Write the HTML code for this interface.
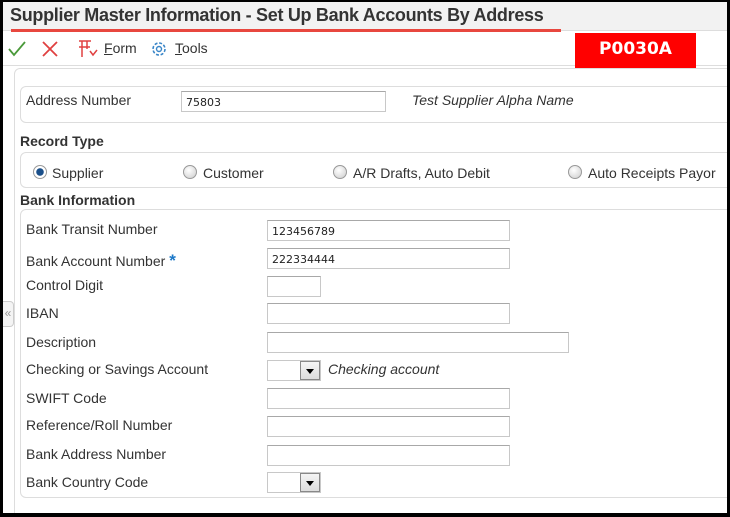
<!DOCTYPE html>
<html><head><style>
*{margin:0;padding:0;box-sizing:border-box}
html,body{width:730px;height:517px;overflow:hidden}
body{background:#000;position:relative;font-family:"Liberation Sans",Arial,sans-serif;color:#333}
#pg{position:absolute;left:3px;top:2px;width:724px;height:511px;background:#fff;overflow:hidden}
.a{position:absolute;white-space:nowrap}
.hdr{left:0;top:0;width:724px;height:29px;background:#f2f2f2;border-bottom:1px solid #ddd}
.lbl{font-size:14px;color:#333}
.in{position:absolute;height:21px;border:1px solid #c8c8c8;border-top-color:#a8a8a8;background:#fff;font-size:11px;padding:4px 0 0 4px;color:#222;font-family:"DejaVu Sans",sans-serif}
.box{position:absolute;border:1px solid #ddd;border-radius:6px;background:#fff}
.sec{font-size:14px;font-weight:bold;color:#333}
.sel{position:absolute;width:54px;height:21px;border:1px solid #c8c8c8;background:#fff}
.sel b{position:absolute;right:0;top:0;width:20px;height:19px;border:1px solid #888;background:linear-gradient(#f4f4f4,#ddd)}
.sel b:after{content:"";position:absolute;left:5px;top:7px;border-left:4px solid transparent;border-right:4px solid transparent;border-top:5px solid #000}
.rad{position:absolute;width:14px;height:14px;border-radius:50%;border:1px solid #999;background:radial-gradient(circle at 40% 35%,#fff,#ccc)}
</style></head><body><div id="pg">
<div class="a hdr"></div>
<div class="a" style="left:7px;top:3px;font-size:18px;font-weight:bold;color:#333;letter-spacing:-0.3px">Supplier Master Information - Set Up Bank Accounts By Address</div>
<div class="a" style="left:8px;top:27px;width:550px;height:3px;background:#e8473f"></div>
<svg class="a" style="left:4px;top:38px" width="20" height="18"><path d="M2 9 L7 15 L18 2" stroke="#4a9a3a" stroke-width="1.8" fill="none"/></svg>
<svg class="a" style="left:38px;top:38px" width="18" height="18"><path d="M2 2 L16 16 M16 2 L2 16" stroke="#e04040" stroke-width="1.8"/></svg>
<svg class="a" style="left:74px;top:37px" width="24" height="20"><path d="M2 2 H14 M5 2 V18 M2 8 H13 M10 2 V10" stroke="#e04040" stroke-width="1.5" fill="none"/><path d="M13 12 L16 16 L20 11" stroke="#e04040" stroke-width="1.5" fill="none"/></svg>
<div class="a" style="left:101px;top:38px;font-size:14px;color:#333"><u>F</u>orm</div>
<svg class="a" style="left:146px;top:37px" width="20" height="20"><circle cx="10" cy="10" r="6" stroke="#3a86c8" stroke-width="1.6" fill="none" stroke-dasharray="3 1.7"/><circle cx="10" cy="10" r="2.5" stroke="#3a86c8" stroke-width="1.4" fill="none"/></svg>
<div class="a" style="left:172px;top:38px;font-size:14px;color:#333"><u>T</u>ools</div>
<div class="a" style="left:0;top:63px;width:724px;height:1px;background:#ddd"></div>
<div class="a" style="left:572px;top:31px;width:121px;height:37px;background:#f00;color:#fff;font-weight:bold;font-size:17px;text-align:center;line-height:33px;font-family:'DejaVu Sans',sans-serif">P0030A</div>
<div class="box" style="left:11px;top:66px;width:730px;height:460px"></div>
<div class="box" style="left:17px;top:84px;width:720px;height:37px"></div>
<div class="a lbl" style="left:23px;top:90px">Address Number</div>
<div class="in" style="left:178px;top:89px;width:205px;height:21px">75803</div>
<div class="a" style="left:409px;top:90px;font-size:14px;font-style:italic;color:#333">Test Supplier Alpha Name</div>
<div class="a sec" style="left:17px;top:131px">Record Type</div>
<div class="box" style="left:17px;top:150px;width:720px;height:36px"></div>
<div class="rad" style="left:30px;top:163px;background:radial-gradient(circle,#1a4f8a 0 3.5px,#fff 4px)"></div>
<div class="a lbl" style="left:49px;top:163px">Supplier</div>
<div class="rad" style="left:180px;top:163px"></div>
<div class="a lbl" style="left:200px;top:163px">Customer</div>
<div class="rad" style="left:330px;top:163px"></div>
<div class="a lbl" style="left:350px;top:163px">A/R Drafts, Auto Debit</div>
<div class="rad" style="left:565px;top:163px"></div>
<div class="a lbl" style="left:585px;top:163px">Auto Receipts Payor</div>
<div class="a sec" style="left:17px;top:190px">Bank Information</div>
<div class="box" style="left:17px;top:207px;width:720px;height:289px"></div>
<div class="a" style="left:0;top:299px;width:11px;height:26px;border:1px solid #ccc;border-left:none;border-radius:0 4px 4px 0;background:#f4f4f4;font-size:12px;color:#999;line-height:22px;text-align:center">«</div>
<div class="a lbl" style="left:23px;top:219px">Bank Transit Number</div>
<div class="in" style="left:264px;top:218px;width:243px">123456789</div>
<div class="a lbl" style="left:23px;top:249px">Bank Account Number <span style="color:#1b78c8;font-weight:bold;font-size:17px">*</span></div>
<div class="in" style="left:264px;top:246px;width:243px">222334444</div>
<div class="a lbl" style="left:23px;top:275px">Control Digit</div>
<div class="in" style="left:264px;top:274px;width:54px"></div>
<div class="a lbl" style="left:23px;top:303px">IBAN</div>
<div class="in" style="left:264px;top:301px;width:243px"></div>
<div class="a lbl" style="left:23px;top:332px">Description</div>
<div class="in" style="left:264px;top:330px;width:302px"></div>
<div class="a lbl" style="left:23px;top:359px">Checking or Savings Account</div>
<div class="sel" style="left:264px;top:358px"><b></b></div>
<div class="a" style="left:325px;top:359px;font-size:14px;font-style:italic;color:#333">Checking account</div>
<div class="a lbl" style="left:23px;top:388px">SWIFT Code</div>
<div class="in" style="left:264px;top:386px;width:243px"></div>
<div class="a lbl" style="left:23px;top:415px">Reference/Roll Number</div>
<div class="in" style="left:264px;top:414px;width:243px"></div>
<div class="a lbl" style="left:23px;top:444px">Bank Address Number</div>
<div class="in" style="left:264px;top:443px;width:243px"></div>
<div class="a lbl" style="left:23px;top:472px">Bank Country Code</div>
<div class="sel" style="left:264px;top:470px"><b></b></div>
</div></body></html>
